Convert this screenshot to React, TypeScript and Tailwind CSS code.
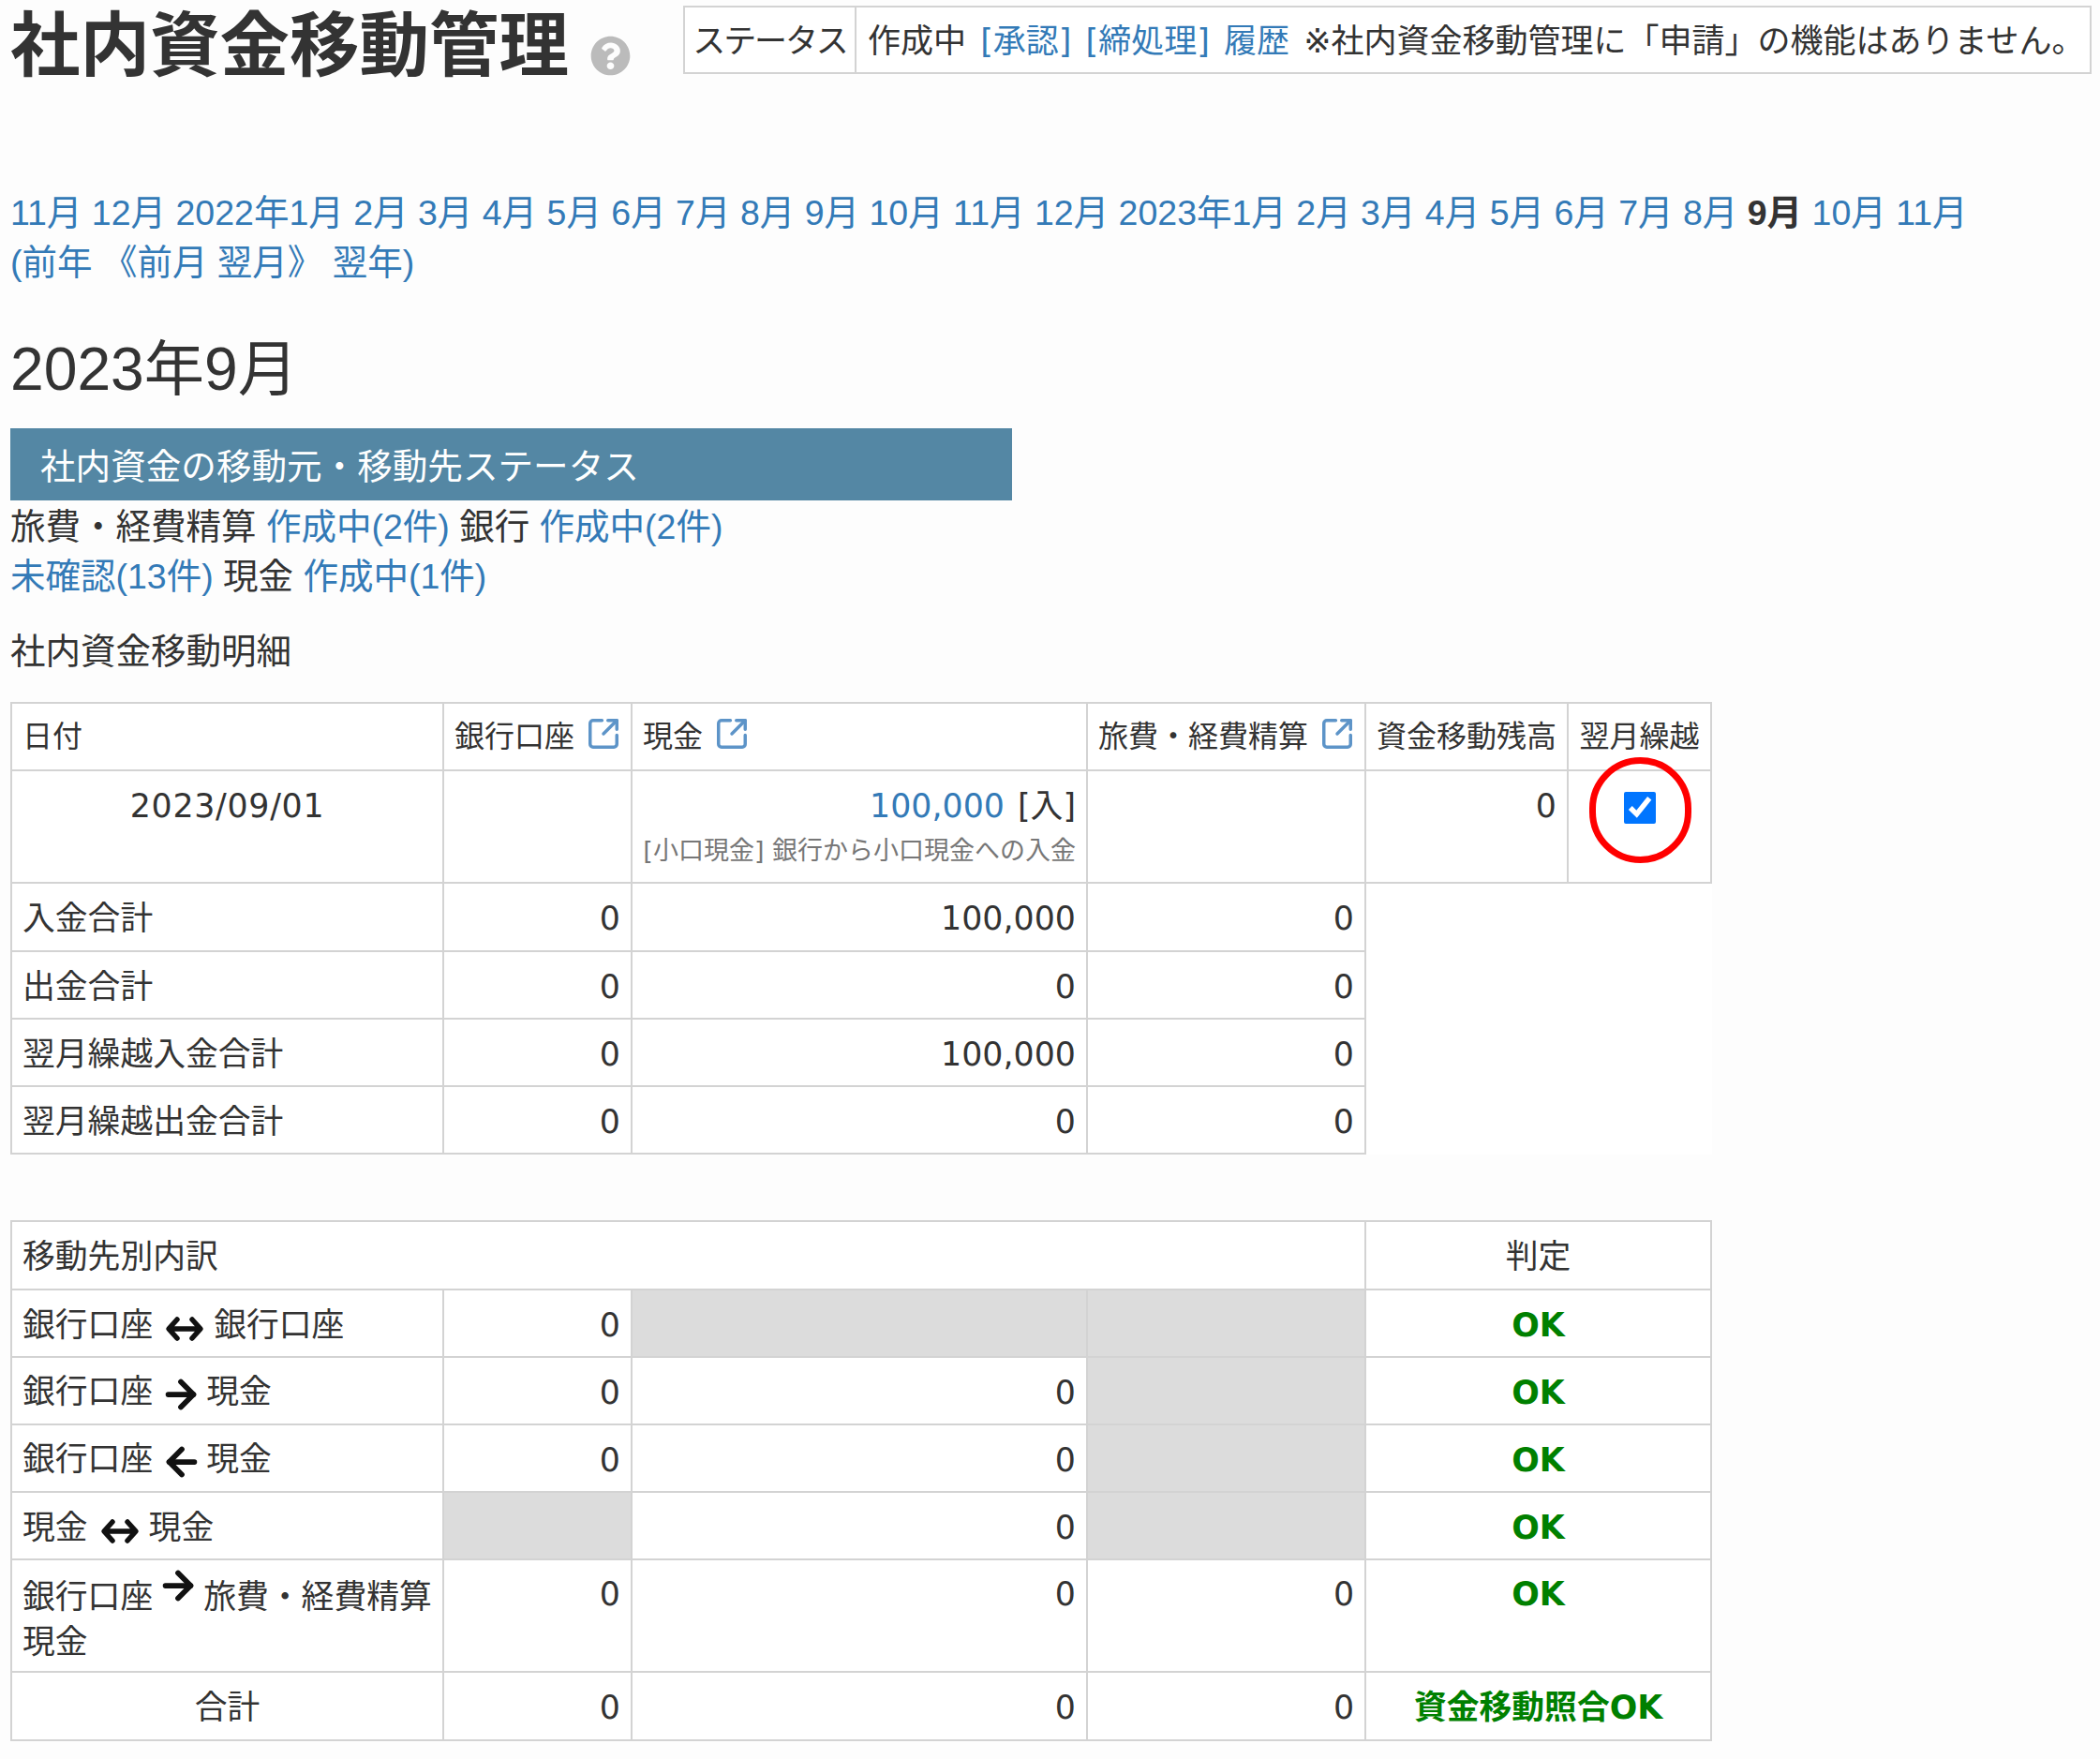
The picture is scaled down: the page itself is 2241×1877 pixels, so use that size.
import React from 'react';
import { FaQuestionCircle } from 'react-icons/fa';
import { ArrowLeft, ArrowRight, SquareArrowOutUpRight } from 'lucide-react';

const navLinks = [
    '11月', '12月', '2022年1月', '2月', '3月', '4月', '5月', '6月', '7月', '8月', '9月', '10月', '11月', '12月',
    '2023年1月', '2月', '3月', '4月', '5月', '6月', '7月', '8月',
];

const cellBase = 'border-2 border-[#d3d3d3] px-[11px] h-[72px] leading-[48px] align-middle';
const bodyCell = `${cellBase} pt-[3px]`;
const numCell = `${bodyCell} text-right`;
const grayCell = `${cellBase} bg-[#dcdcdc] border-[#cfcfcf]`;

const Link: React.FC<{ children: React.ReactNode }> = ({ children }) => (
    <a className="text-[#337ab7]">{children}</a>
);

const ExtIcon = () => (
    <SquareArrowOutUpRight size={38} strokeWidth={2.2} className="inline-block text-[#5d94c8] ml-[12px] align-[-5px]" />
);

const Both = () => (
    <svg width="46" height="36" viewBox="0 0 46 36" className="inline-block ml-[11px] mr-[8px] align-[-10px]" fill="none" stroke="#111" strokeWidth="5.5" strokeLinecap="round" strokeLinejoin="round">
        <path d="M7 18h32M15 8l-9 10 9 10M31 8l9 10-9 10" />
    </svg>
);

const Right = ({ className = 'ml-[7px] mr-[4px] align-[-14px]' }: { className?: string }) => (
    <ArrowRight size={46} strokeWidth={3} color="#111" className={`inline-block ${className}`} />
);

const Left = () => <ArrowLeft size={46} strokeWidth={3} color="#111" className="inline-block ml-[8px] mr-[3px] align-[-14px]" />;

const Cols = () => (
    <colgroup>
        <col className="w-[461px]" />
        <col className="w-[201px]" />
        <col className="w-[486px]" />
        <col className="w-[297px]" />
        <col className="w-[216px]" />
        <col className="w-[153px]" />
    </colgroup>
);

const SumRow = ({ label, a, b, c, tall }: { label: string; a: string; b: string; c: string; tall?: boolean }) => (
    <tr className={tall ? 'h-[73px]' : ''}>
        <td className={bodyCell}>{label}</td>
        <td className={numCell}>{a}</td>
        <td className={numCell}>{b}</td>
        <td className={numCell}>{c}</td>
    </tr>
);

const Ok = () => <td colSpan={2} className={`${bodyCell} text-center font-bold text-[#008000]`}>OK</td>;

export default function App() {
    return (
        <div className="min-h-[1877px] bg-[#fdfdfd] text-[#333] pl-[11px] font-['Liberation_Sans','Noto_Sans_CJK_JP',sans-serif]">
            <div className="flex items-start h-[120px]">
                <h1 className="text-[74.5px] leading-[100px] font-bold w-[718px] shrink-0 flex items-center whitespace-nowrap">
                    社内資金移動管理
                    <FaQuestionCircle size={43} className="text-[#bbbbbb] ml-[23px] mt-[18px] shrink-0" />
                </h1>
                <div className="mt-[6px] w-[1503px] h-[73px] flex border-2 border-[#d3d3d3] bg-white text-[35px] leading-[72px] whitespace-nowrap font-['DejaVu_Sans','Noto_Sans_CJK_JP',sans-serif]">
                    <div className="w-[183px] shrink-0 border-r-2 border-[#d3d3d3] text-center tracking-[-0.06em]">ステータス</div>
                    <div className="pl-[12px] [word-spacing:4px]">
                        作成中 <Link>[承認]</Link> <Link>[締処理]</Link> <Link>履歴</Link> ※社内資金移動管理に「申請」の機能はありません。
                    </div>
                </div>
            </div>

            <div className="pt-[81px] text-[37.5px] leading-[53px]">
                <div className="whitespace-nowrap">
                    {navLinks.map((m, i) => (
                        <span key={i}><Link>{m}</Link> </span>
                    ))}
                    <b>9月</b> <Link>10月</Link> <Link>11月</Link>
                </div>
                <div className="text-[#337ab7]">(前年 《前月 翌月》 翌年)</div>
            </div>

            <h2 className="mt-[47px] text-[64.2px] leading-[80px]">2023年9月</h2>

            <div className="mt-[23px] w-[1069px] h-[77px] bg-[#5487a4] text-white text-[37.6px] leading-[83px] pl-[32px]">
                社内資金の移動元・移動先ステータス
            </div>

            <div className="pt-[2px] text-[37.5px] leading-[53px]">
                <div>旅費・経費精算 <Link>作成中(2件)</Link> 銀行 <Link>作成中(2件)</Link></div>
                <div><Link>未確認(13件)</Link> 現金 <Link>作成中(1件)</Link></div>
            </div>

            <div className="mt-[27px] text-[37.5px] leading-[53px]">社内資金移動明細</div>

            <div className="mt-[27px] font-['DejaVu_Sans','Noto_Sans_CJK_JP',sans-serif] text-[34.8px]">
                <table className="table-fixed border-collapse w-[1814px] bg-white">
                    <Cols />
                    <tbody>
                        <tr className="text-[32px] whitespace-nowrap">
                            <td className={cellBase}>日付</td>
                            <td className={cellBase}>銀行口座<ExtIcon /></td>
                            <td className={cellBase}>現金<ExtIcon /></td>
                            <td className={cellBase}>旅費・経費精算<ExtIcon /></td>
                            <td className={cellBase}>資金移動残高</td>
                            <td className={`${cellBase} text-center px-0`}>翌月繰越</td>
                        </tr>
                        <tr>
                            <td className={`${cellBase} h-[120px] align-top pt-[13px] text-center tracking-[0.02em]`}>2023/09/01</td>
                            <td className={cellBase} />
                            <td className={`${cellBase} h-[120px] align-top pt-[13px] text-right`}>
                                <Link>100,000</Link> <span className="ml-[3px]">[入]</span>
                                <div className="text-[27px] leading-[36px] pt-[6px] text-[#777]">[小口現金] 銀行から小口現金への入金</div>
                            </td>
                            <td className={cellBase} />
                            <td className={`${cellBase} h-[120px] align-top pt-[13px] text-right`}>0</td>
                            <td className={`${cellBase} h-[120px] align-top pt-[22px] text-center relative`}>
                                <input type="checkbox" defaultChecked className="w-[34px] h-[34px] align-top" />
                                <div className="absolute left-[22px] top-[-15px] w-[109px] h-[113px] rounded-full border-[7px] border-[#ff0000]" />
                            </td>
                        </tr>
                        <SumRow label="入金合計" a="0" b="100,000" c="0" tall />
                        <SumRow label="出金合計" a="0" b="0" c="0" />
                        <SumRow label="翌月繰越入金合計" a="0" b="100,000" c="0" />
                        <SumRow label="翌月繰越出金合計" a="0" b="0" c="0" />
                    </tbody>
                </table>

                <table className="mt-[70px] table-fixed border-collapse w-[1814px] bg-white">
                    <Cols />
                    <tbody>
                        <tr className="h-[73px]">
                            <td colSpan={4} className={bodyCell}>移動先別内訳</td>
                            <td colSpan={2} className={`${bodyCell} text-center`}>判定</td>
                        </tr>
                        <tr>
                            <td className={bodyCell}>銀行口座<Both />銀行口座</td>
                            <td className={numCell}>0</td>
                            <td className={grayCell} />
                            <td className={grayCell} />
                            <Ok />
                        </tr>
                        <tr>
                            <td className={bodyCell}>銀行口座<Right />現金</td>
                            <td className={numCell}>0</td>
                            <td className={numCell}>0</td>
                            <td className={grayCell} />
                            <Ok />
                        </tr>
                        <tr>
                            <td className={bodyCell}>銀行口座<Left />現金</td>
                            <td className={numCell}>0</td>
                            <td className={numCell}>0</td>
                            <td className={grayCell} />
                            <Ok />
                        </tr>
                        <tr>
                            <td className={bodyCell}>現金<Both />現金</td>
                            <td className={grayCell} />
                            <td className={numCell}>0</td>
                            <td className={grayCell} />
                            <Ok />
                        </tr>
                        <tr className="[&>td]:align-top [&>td]:pt-[12px]">
                            <td className={`${cellBase} h-[120px]`}>銀行口座<Right className="ml-[4px] mr-[4px] align-[-7px] relative -top-[8px]" />旅費・経費精算 現金</td>
                            <td className={numCell}>0</td>
                            <td className={numCell}>0</td>
                            <td className={numCell}>0</td>
                            <Ok />
                        </tr>
                        <tr className="h-[73px]">
                            <td className={`${bodyCell} text-center`}>合計</td>
                            <td className={numCell}>0</td>
                            <td className={numCell}>0</td>
                            <td className={numCell}>0</td>
                            <td colSpan={2} className={`${bodyCell} text-center font-bold text-[#008000]`}>資金移動照合OK</td>
                        </tr>
                    </tbody>
                </table>
            </div>
        </div>
    );
}
